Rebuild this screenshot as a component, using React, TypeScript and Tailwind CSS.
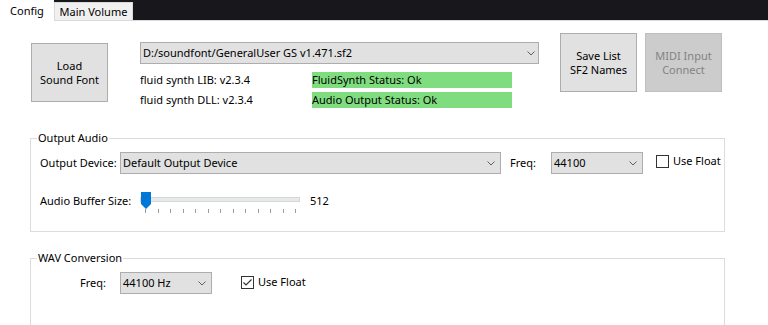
import React from "react";

function Chevron() {
  return (
    <svg width="8" height="5" viewBox="0 0 8 5" className="shrink-0">
      <path d="M0.5 0.5 L4 4 L7.5 0.5" stroke="#606060" strokeWidth="1" fill="none" />
    </svg>
  );
}

function Combo({ cls, text, pr }: { cls: string; text: string; pr: string }) {
  return (
    <div
      className={`h-[22px] bg-[#e1e1e1] border border-[#adadad] flex items-center justify-between pl-[2px] ${pr} ${cls}`}
    >
      <span className="whitespace-nowrap">{text}</span>
      <Chevron />
    </div>
  );
}

function CheckBox({ checked }: { checked: boolean }) {
  return (
    <div className="w-[13px] h-[13px] border border-[#333333] bg-white shrink-0 flex items-center justify-center">
      {checked && (
        <svg width="11" height="11" viewBox="0 0 11 11">
          <path d="M1.5 5.5 L4 8 L9.5 2.5" stroke="#333333" strokeWidth="1.2" fill="none" />
        </svg>
      )}
    </div>
  );
}

function Slider() {
  const ticks = Array.from({ length: 13 });
  return (
    <div className="relative w-[161px] h-[22px] shrink-0">
      <div className="absolute left-0 top-[5px] w-[160px] h-[5px] bg-[#e7eaea] border border-[#d6d6d6]" />
      <svg className="absolute left-[1px] top-0" width="10" height="17" viewBox="0 0 10 17">
        <path d="M0 0 H10 V12 L5 17 L0 12 Z" fill="#0078d7" />
      </svg>
      <div className="absolute left-[5px] top-[17px] w-[151px] h-[4px] flex justify-between">
        {ticks.map((_, i) => (
          <div key={i} className="w-[1px] h-[4px] bg-[#9c9c9c]" />
        ))}
      </div>
    </div>
  );
}

export default function App() {
  return (
    <div className="w-[768px] h-[325px] overflow-hidden bg-white text-[11px] leading-[16px] text-black font-['Noto_Sans','Open_Sans',Arial,sans-serif]">
      {/* Tabs */}
      <div className="flex h-[21px]">
        <div className="w-[54px] h-[21px] bg-white flex items-center justify-center">Config</div>
        <div className="flex-1 flex bg-[#18181c] border-b border-[#d9d9d9]">
          <div className="mt-[2px] w-[79px] h-[18px] bg-[#f0f0f0] border border-b-0 border-[#d9d9d9] flex items-center justify-center pt-[1px]">
            Main Volume
          </div>
        </div>
      </div>

      {/* Top section */}
      <div className="flex h-[109px]">
        <button className="ml-[31px] mt-[22px] w-[77px] h-[59px] bg-[#e1e1e1] border border-[#adadad] leading-[14px] flex flex-col items-center justify-center">
          <span>Load</span>
          <span>Sound Font</span>
        </button>
        <div className="ml-[32px] mt-[21px] w-[399px] flex flex-col">
          <Combo cls="w-[399px]" pr="pr-[3px]" text="D:/soundfont/GeneralUser GS v1.471.sf2" />
          <div className="mt-[8px] flex items-center h-[16px]">
            <span className="w-[172px] whitespace-nowrap">fluid synth LIB: v2.3.4</span>
            <span className="w-[200px] h-[16px] bg-[#7fdd7f] whitespace-nowrap">FluidSynth Status: Ok</span>
          </div>
          <div className="mt-[4px] flex items-center h-[16px]">
            <span className="w-[172px] whitespace-nowrap">fluid synth DLL: v2.3.4</span>
            <span className="w-[200px] h-[16px] bg-[#7fdd7f] whitespace-nowrap">Audio Output Status: Ok</span>
          </div>
        </div>
        <div className="ml-[21px] mt-[12px] flex gap-[8px]">
          <button className="w-[77px] h-[59px] bg-[#e1e1e1] border border-[#adadad] leading-[14px] flex flex-col items-center justify-center">
            <span>Save List</span>
            <span>SF2 Names</span>
          </button>
          <button
            disabled
            className="w-[77px] h-[59px] bg-[#cccccc] border border-[#bfbfbf] text-[#838383] leading-[14px] flex flex-col items-center justify-center"
          >
            <span>MIDI Input</span>
            <span>Connect</span>
          </button>
        </div>
      </div>

      {/* Output Audio */}
      <fieldset className="ml-[30px] w-[695px] border border-[#dcdcdc] pb-[17px]">
        <legend className="ml-[6px] px-[1px] leading-[16px]">Output Audio</legend>
        <div className="mt-[6px] flex items-center h-[22px]">
          <span className="ml-[9px] w-[80px] whitespace-nowrap">Output Device:</span>
          <Combo cls="w-[381px]" pr="pr-[5px]" text="Default Output Device" />
          <span className="ml-[9px] w-[41px]">Freq:</span>
          <Combo cls="w-[92px]" pr="pr-[5px]" text="44100" />
          <div className="ml-[13px] flex items-center self-start mt-[1px] gap-[4px]">
            <CheckBox checked={false} />
            <span className="whitespace-nowrap">Use Float</span>
          </div>
        </div>
        <div className="mt-[18px] flex items-start h-[22px]">
          <span className="ml-[9px] w-[100px] mt-[1px] whitespace-nowrap">Audio Buffer Size:</span>
          <Slider />
          <span className="ml-[9px] mt-[1px]">512</span>
        </div>
      </fieldset>

      {/* WAV Conversion */}
      <fieldset className="mt-[18px] ml-[30px] w-[695px] border border-[#dcdcdc] pb-[40px]">
        <legend className="ml-[6px] px-[1px] leading-[16px]">WAV Conversion</legend>
        <div className="mt-[6px] flex items-center h-[22px]">
          <span className="ml-[49px] w-[40px]">Freq:</span>
          <Combo cls="w-[92px]" pr="pr-[5px]" text="44100 Hz" />
          <div className="ml-[29px] flex items-center self-start mt-[2px] gap-[4px]">
            <CheckBox checked={true} />
            <span className="whitespace-nowrap">Use Float</span>
          </div>
        </div>
      </fieldset>
    </div>
  );
}
